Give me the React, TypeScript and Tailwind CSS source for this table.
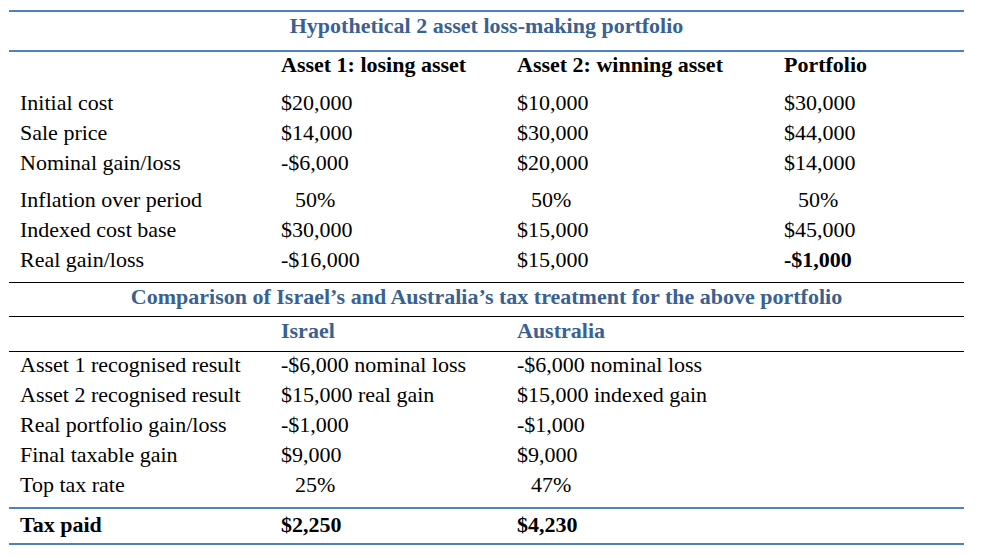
import React from "react";

type Cell = { text: string; indent?: boolean; bold?: boolean };

const c = (text: string, opts: Partial<Cell> = {}): Cell => ({ text, ...opts });

function Row({ cells, className }: { cells: Cell[]; className: string }) {
  return (
    <div className={`grid grid-cols-[272px_236px_267px_1fr] ${className}`}>
      {cells.map((cell, i) => (
        <div
          key={i}
          className={`whitespace-nowrap ${i === 0 ? "pl-[11px]" : ""} ${cell.indent ? "pl-[14px]" : ""} ${cell.bold ? "font-bold" : ""}`}
        >
          {cell.text}
        </div>
      ))}
    </div>
  );
}

const BlueLine = () => <div className="h-[2px] bg-[#4f81bd]" />;
const BlackLine = () => <div className="h-px bg-black" />;

export default function App() {
  const top1 = [
    [c("Initial cost"), c("$20,000"), c("$10,000"), c("$30,000")],
    [c("Sale price"), c("$14,000"), c("$30,000"), c("$44,000")],
    [c("Nominal gain/loss"), c("-$6,000"), c("$20,000"), c("$14,000")],
  ];
  const top2 = [
    [c("Inflation over period"), c("50%", { indent: true }), c("50%", { indent: true }), c("50%", { indent: true })],
    [c("Indexed cost base"), c("$30,000"), c("$15,000"), c("$45,000")],
    [c("Real gain/loss"), c("-$16,000"), c("$15,000"), c("-$1,000", { bold: true })],
  ];
  const bottom = [
    [c("Asset 1 recognised result"), c("-$6,000 nominal loss"), c("-$6,000 nominal loss")],
    [c("Asset 2 recognised result"), c("$15,000 real gain"), c("$15,000 indexed gain")],
    [c("Real portfolio gain/loss"), c("-$1,000"), c("-$1,000")],
    [c("Final taxable gain"), c("$9,000"), c("$9,000")],
    [c("Top tax rate"), c("25%", { indent: true }), c("47%", { indent: true })],
  ];

  return (
    <div className="min-h-[557px] w-[983px] bg-white pt-[10px] font-['Liberation_Serif','Times_New_Roman',serif] text-[22px] text-black">
      <div className="ml-[9px] w-[955px]">
        <BlueLine />
        <div className="h-[38px] text-center font-bold leading-[28px] text-[#3a6190]">
          Hypothetical 2 asset loss-making portfolio
        </div>
        <BlueLine />
        <Row
          className="h-[37px] font-bold leading-[26px]"
          cells={[c(""), c("Asset 1: losing asset"), c("Asset 2: winning asset"), c("Portfolio")]}
        />
        {top1.map((r, i) => (
          <Row key={i} className="h-[30px] leading-[28px]" cells={r} />
        ))}
        <div className="h-[7px]" />
        {top2.map((r, i) => (
          <Row key={i} className="h-[30px] leading-[28px]" cells={r} />
        ))}
        <div className="h-[6px]" />
        <BlackLine />
        <div className="h-[33px] text-center font-bold leading-[27px] text-[#3a6190]">
          Comparison of Israel’s and Australia’s tax treatment for the above portfolio
        </div>
        <BlackLine />
        <Row
          className="h-[34px] font-bold leading-[27px] text-[#3a6190]"
          cells={[c(""), c("Israel"), c("Australia")]}
        />
        <BlackLine />
        {bottom.map((r, i) => (
          <Row key={i} className="h-[30px] leading-[26px]" cells={r} />
        ))}
        <div className="h-[5px]" />
        <BlueLine />
        <Row
          className="h-[34px] font-bold leading-[32px]"
          cells={[c("Tax paid"), c("$2,250"), c("$4,230")]}
        />
        <BlueLine />
      </div>
    </div>
  );
}
